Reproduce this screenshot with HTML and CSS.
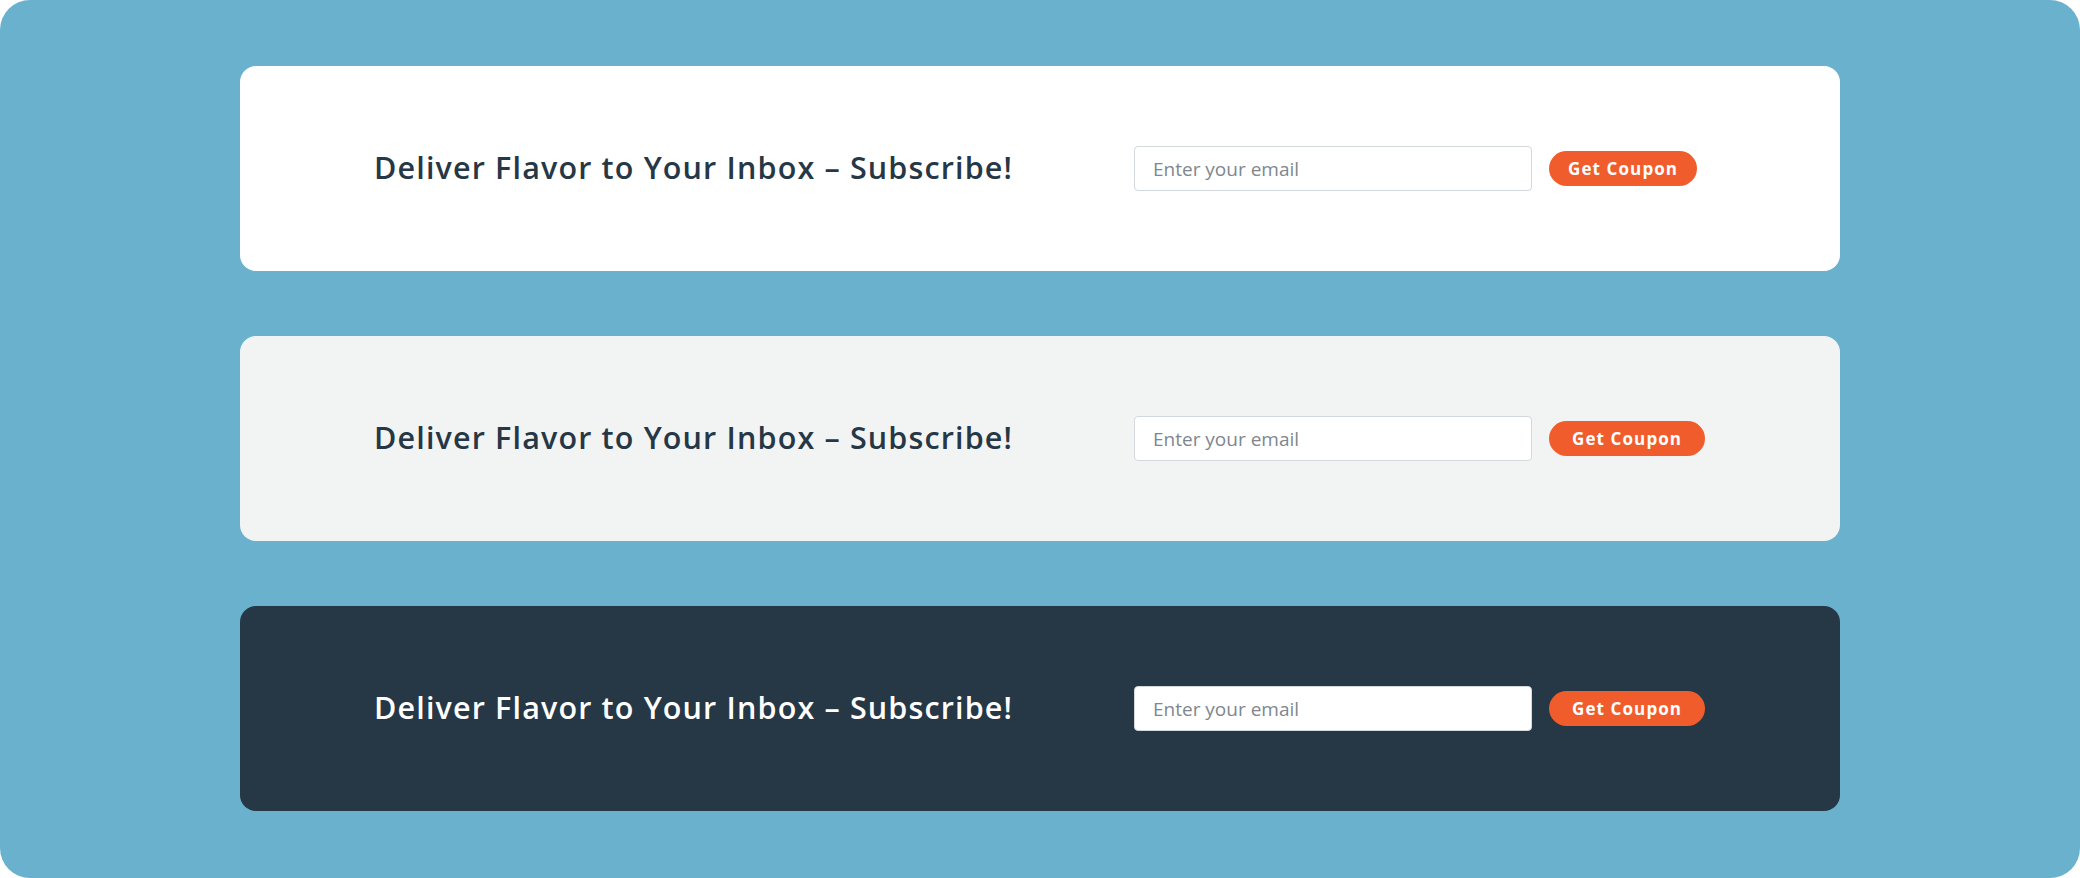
FILE: index.html
```html
<!DOCTYPE html>
<html>
<head>
<meta charset="utf-8">
<link rel="stylesheet" href="styles.css">
</head>
<body>
<main class="frame">
  <section class="banner banner-light">
    <h2 class="banner-title">Deliver Flavor to Your Inbox – Subscribe!</h2>
    <form class="banner-form">
      <input class="email" type="email" placeholder="Enter your email">
      <button class="cta cta-compact" type="button">Get Coupon</button>
    </form>
  </section>
  <section class="banner banner-grey">
    <h2 class="banner-title">Deliver Flavor to Your Inbox – Subscribe!</h2>
    <form class="banner-form">
      <input class="email" type="email" placeholder="Enter your email">
      <button class="cta" type="button">Get Coupon</button>
    </form>
  </section>
  <section class="banner banner-dark">
    <h2 class="banner-title">Deliver Flavor to Your Inbox – Subscribe!</h2>
    <form class="banner-form">
      <input class="email" type="email" placeholder="Enter your email">
      <button class="cta" type="button">Get Coupon</button>
    </form>
  </section>
</main>
</body>
</html>
```

FILE: styles.css
```css
* { box-sizing: border-box; }
html, body { margin: 0; padding: 0; background: #ffffff; }
body { font-family: "Open Sans", "Liberation Sans", sans-serif; }

.frame {
  width: 2080px;
  height: 878px;
  background: #6ab1ce;
  border-radius: 30px;
  padding: 66px 240px 0;
  display: flex;
  flex-direction: column;
  gap: 65px;
}

.banner {
  height: 205px;
  border-radius: 16px;
  display: flex;
  align-items: center;
  padding-left: 134px;
}
.banner-light { background: #ffffff; }
.banner-grey { background: #f2f4f3; }
.banner-dark { background: #263746; }

.banner-title {
  margin: 0 0 3px;
  flex: 0 0 760px;
  font-size: 30.5px;
  font-weight: 600;
  color: #263746;
  letter-spacing: 1.15px;
  white-space: nowrap;
}
.banner-dark .banner-title { color: #ffffff; }

.banner-form {
  display: flex;
  align-items: center;
  gap: 17px;
  margin: 0;
}

.email {
  width: 398px;
  height: 45px;
  border: 1px solid #d3d8dc;
  border-radius: 4px;
  background: #ffffff;
  padding: 0 18px;
  font-family: "Open Sans", "Liberation Sans", sans-serif;
  font-size: 19px;
  color: #263746;
  outline: none;
}
.email::placeholder { color: #7e878f; }

.cta {
  height: 35px;
  border: 0;
  border-radius: 18px;
  background: #f15c2d;
  color: #ffffff;
  font-family: "Open Sans", "Liberation Sans", sans-serif;
  font-weight: 700;
  font-size: 17px;
  letter-spacing: 1.1px;
  padding: 0 23px;
  cursor: pointer;
}
.cta-compact { padding: 0 19px; }
```
